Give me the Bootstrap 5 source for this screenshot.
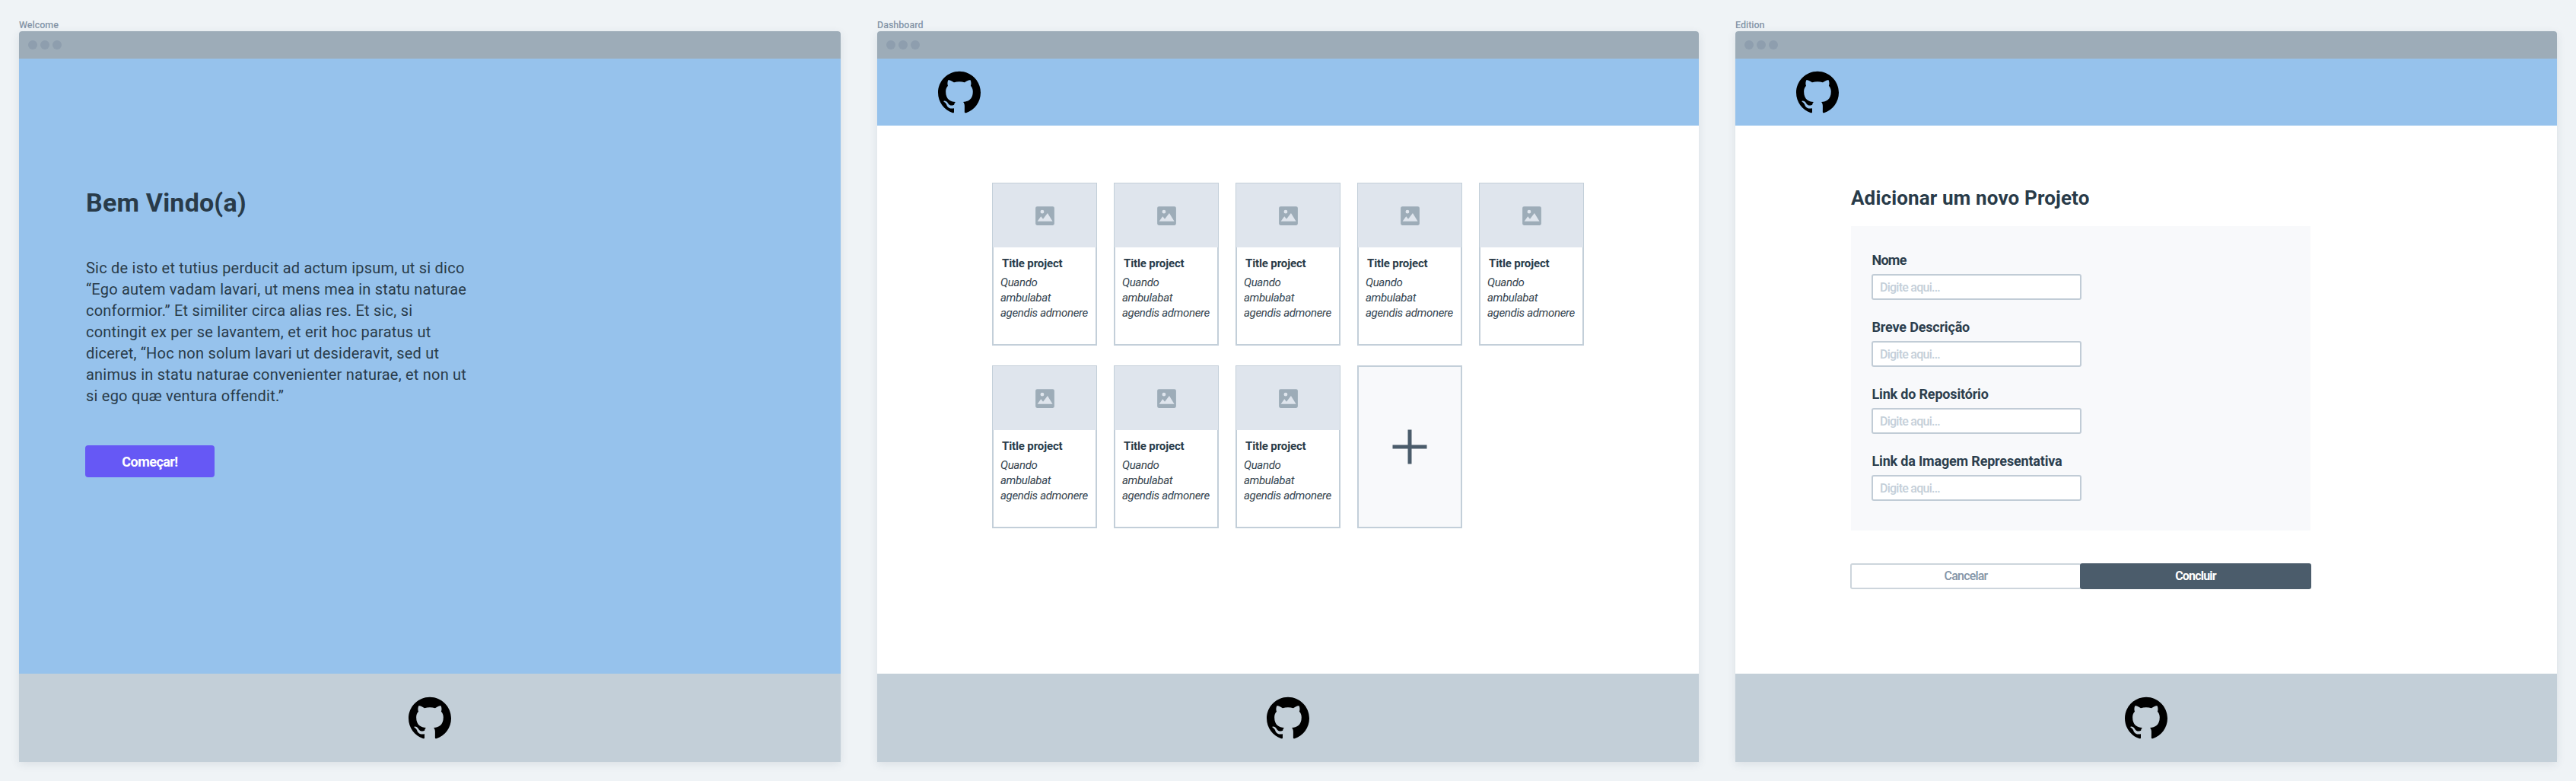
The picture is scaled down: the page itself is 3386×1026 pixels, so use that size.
<!DOCTYPE html>
<html lang="pt-BR">
<head>
<meta charset="utf-8">
<meta name="viewport" content="width=device-width, initial-scale=1">
<title>Wireframes</title>
<link href="https://cdn.jsdelivr.net/npm/bootstrap@5.3.0/dist/css/bootstrap.min.css" rel="stylesheet">
<style>
  body { background: #eff3f6; color: #2c3e4d; font-family: Roboto, "Liberation Sans", sans-serif; }
  .board { width: 3386px; height: 1026px; padding: 25px 25px 0; gap: 48px; overflow: hidden; }
  .frame-name { font-size: 12.5px; line-height: 16px; font-weight: 500; color: #8495a7; }
  .screen { width: 1080px; height: 960px; background: #fff; border-radius: 4px 4px 0 0; box-shadow: 0 3px 12px rgba(44, 62, 77, .1); overflow: hidden; }
  .titlebar { height: 36px; background: #9dacb8; padding-left: 12px; gap: 4px; }
  .dot { width: 12px; height: 12px; border-radius: 50%; background: #8e9eae; }
  .sky { background: #96c2ec; }
  .site-header { height: 88px; padding-left: 80px; }
  .site-footer { height: 116px; background: #c3cfd8; }
  .octo { width: 56px; height: 56px; fill: #000; display: block; }

  .hero { padding: 169px 0 0 87px; }
  .hero h1 { font-size: 34px; line-height: 40px; font-weight: 700; letter-spacing: .2px; margin: 0 0 52px 1px; color: #293b49; }
  .hero p { font-size: 20px; line-height: 28px; letter-spacing: .22px; margin: 0 0 51px 1px; color: #293b49; white-space: nowrap; }
  .btn-start { width: 170px; height: 42px; padding: 0; border: 0; border-radius: 4px; background: #6658f5; color: #fff; font-size: 18px; font-weight: 700; letter-spacing: -.55px; }
  .btn-start:hover { background: #5547e4; color: #fff; }

  .gallery { width: 778px; margin: 75px 0 0 151px; gap: 26px 22px; }
  .project { width: 138px; height: 214px; border: 2px solid #c3cfd9; border-radius: 0; background: #fff; }
  .thumb { height: 84px; margin: -1px -1px 0; background: #dfe5ed; }
  .thumb svg { width: 33px; height: 33px; fill: #9dacb8; }
  .project h2 { font-size: 15px; line-height: 20px; font-weight: 700; letter-spacing: -.13px; margin: 11px 0 5px 11px; color: #293b49; }
  .project p { font-size: 15px; line-height: 20px; letter-spacing: -.33px; margin: 0 0 0 9px; white-space: nowrap; color: #34444f; }
  .project-new { background: #f8f9fb; }
  .project-new svg { width: 46px; height: 46px; stroke: #4b5c6b; }

  .editor { width: 606px; margin: 79px 0 0 151px; }
  .editor h1 { font-size: 26px; line-height: 32px; font-weight: 700; letter-spacing: .15px; margin: 0 0 21px 1px; color: #293b49; }
  .panel { height: 400px; margin: 0 1px 43px; padding: 33px 0 0 27px; background: #f8f9fb; }
  .field { width: 276px; margin-bottom: 24px; }
  .field label { display: block; font-size: 18px; line-height: 24px; font-weight: 700; letter-spacing: -.18px; margin: 0 0 6px .5px; color: #2c3e4d; }
  .field .tight { letter-spacing: -.75px; }
  .field .form-control { height: 34px; padding: 0 9px; border: 2px solid #c1ccd6; border-radius: 3px; font-size: 16px; font-weight: 500; line-height: 30px; letter-spacing: -.75px; background: #fff; }
  .field .form-control::placeholder { color: #c4cfd9; opacity: 1; }
  .action { width: 304px; height: 34px; padding: 0; border-width: 2px; border-radius: 3px; font-size: 16px; line-height: 30px; letter-spacing: -.8px; }
  .action-cancel { border-color: #cdd5dc; background: #fff; color: #8495a7; font-weight: 500; }
  .action-done { margin-left: -2px; border-color: #4b5c6b; background: #4b5c6b; color: #fff; font-weight: 700; }
</style>
</head>
<body>
<svg class="d-none" xmlns="http://www.w3.org/2000/svg">
  <symbol id="octocat" viewBox="0 0 24 24"><path d="M12 .297c-6.63 0-12 5.373-12 12 0 5.303 3.438 9.8 8.205 11.385.6.113.82-.258.82-.577 0-.285-.01-1.04-.015-2.04-3.338.724-4.042-1.61-4.042-1.61C4.422 18.07 3.633 17.7 3.633 17.7c-1.087-.744.084-.729.084-.729 1.205.084 1.838 1.236 1.838 1.236 1.07 1.835 2.809 1.305 3.495.998.108-.776.417-1.305.76-1.605-2.665-.3-5.466-1.332-5.466-5.93 0-1.31.465-2.38 1.235-3.22-.135-.303-.54-1.523.105-3.176 0 0 1.005-.322 3.3 1.23.96-.267 1.98-.399 3-.405 1.02.006 2.04.138 3 .405 2.28-1.552 3.285-1.23 3.285-1.23.645 1.653.24 2.873.12 3.176.765.84 1.23 1.91 1.23 3.22 0 4.61-2.805 5.625-5.475 5.92.42.36.81 1.096.81 2.22 0 1.606-.015 2.896-.015 3.286 0 .315.21.69.825.57C20.565 22.092 24 17.592 24 12.297c0-6.627-5.373-12-12-12"/></symbol>
  <symbol id="picture" viewBox="0 0 24 24"><path fill-rule="evenodd" d="M4.500 3h15A1.500 1.500 0 0 1 21 4.500v15a1.500 1.500 0 0 1-1.500 1.500h-15A1.500 1.500 0 0 1 3 19.500v-15A1.500 1.500 0 0 1 4.500 3zM4.800 17.300h14.500L14.500 9.500l-4.300 5.600-2-2.500zM9.400 6.400a1.750 1.750 0 1 0 0 3.500 1.750 1.750 0 0 0 0-3.500z"/></symbol>
</svg>

<main class="board d-flex">
  <section>
    <div class="frame-name">Welcome</div>
    <div class="screen d-flex flex-column">
      <div class="titlebar d-flex align-items-center flex-shrink-0"><span class="dot"></span><span class="dot"></span><span class="dot"></span></div>
      <div class="hero sky flex-grow-1">
        <h1>Bem Vindo(a)</h1>
        <p>Sic de isto et tutius perducit ad actum ipsum, ut si dico<br>“Ego autem vadam lavari, ut mens mea in statu naturae<br>conformior.” Et similiter circa alias res. Et sic, si<br>contingit ex per se lavantem, et erit hoc paratus ut<br>diceret, “Hoc non solum lavari ut desideravit, sed ut<br>animus in statu naturae convenienter naturae, et non ut<br>si ego quæ ventura offendit.”</p>
        <button class="btn btn-start d-block" type="button">Começar!</button>
      </div>
      <footer class="site-footer d-flex align-items-center justify-content-center"><svg class="octo"><use href="#octocat"/></svg></footer>
    </div>
  </section>

  <section>
    <div class="frame-name">Dashboard</div>
    <div class="screen d-flex flex-column">
      <div class="titlebar d-flex align-items-center flex-shrink-0"><span class="dot"></span><span class="dot"></span><span class="dot"></span></div>
      <header class="site-header sky d-flex align-items-center"><svg class="octo"><use href="#octocat"/></svg></header>
      <div class="flex-grow-1">
        <div class="gallery d-flex flex-wrap">
          <article class="project"><div class="thumb d-flex align-items-center justify-content-center"><svg><use href="#picture"/></svg></div><h2>Title project</h2><p class="fst-italic">Quando<br>ambulabat<br>agendis admonere</p></article>
          <article class="project"><div class="thumb d-flex align-items-center justify-content-center"><svg><use href="#picture"/></svg></div><h2>Title project</h2><p class="fst-italic">Quando<br>ambulabat<br>agendis admonere</p></article>
          <article class="project"><div class="thumb d-flex align-items-center justify-content-center"><svg><use href="#picture"/></svg></div><h2>Title project</h2><p class="fst-italic">Quando<br>ambulabat<br>agendis admonere</p></article>
          <article class="project"><div class="thumb d-flex align-items-center justify-content-center"><svg><use href="#picture"/></svg></div><h2>Title project</h2><p class="fst-italic">Quando<br>ambulabat<br>agendis admonere</p></article>
          <article class="project"><div class="thumb d-flex align-items-center justify-content-center"><svg><use href="#picture"/></svg></div><h2>Title project</h2><p class="fst-italic">Quando<br>ambulabat<br>agendis admonere</p></article>
          <article class="project"><div class="thumb d-flex align-items-center justify-content-center"><svg><use href="#picture"/></svg></div><h2>Title project</h2><p class="fst-italic">Quando<br>ambulabat<br>agendis admonere</p></article>
          <article class="project"><div class="thumb d-flex align-items-center justify-content-center"><svg><use href="#picture"/></svg></div><h2>Title project</h2><p class="fst-italic">Quando<br>ambulabat<br>agendis admonere</p></article>
          <article class="project"><div class="thumb d-flex align-items-center justify-content-center"><svg><use href="#picture"/></svg></div><h2>Title project</h2><p class="fst-italic">Quando<br>ambulabat<br>agendis admonere</p></article>
          <div class="project project-new d-flex align-items-center justify-content-center"><svg viewBox="0 0 46 46"><path d="M23 .5v45M.5 23h45" fill="none" stroke-width="5"/></svg></div>
        </div>
      </div>
      <footer class="site-footer d-flex align-items-center justify-content-center"><svg class="octo"><use href="#octocat"/></svg></footer>
    </div>
  </section>

  <section>
    <div class="frame-name">Edition</div>
    <div class="screen d-flex flex-column">
      <div class="titlebar d-flex align-items-center flex-shrink-0"><span class="dot"></span><span class="dot"></span><span class="dot"></span></div>
      <header class="site-header sky d-flex align-items-center"><svg class="octo"><use href="#octocat"/></svg></header>
      <div class="flex-grow-1">
        <form class="editor">
          <h1>Adicionar um novo Projeto</h1>
          <div class="panel">
            <div class="field"><label class="tight" for="nome">Nome</label><input id="nome" class="form-control" type="text" placeholder="Digite aqui..."></div>
            <div class="field"><label for="desc">Breve Descrição</label><input id="desc" class="form-control" type="text" placeholder="Digite aqui..."></div>
            <div class="field"><label for="repo">Link do Repositório</label><input id="repo" class="form-control" type="text" placeholder="Digite aqui..."></div>
            <div class="field"><label for="imagem">Link da Imagem Representativa</label><input id="imagem" class="form-control" type="text" placeholder="Digite aqui..."></div>
          </div>
          <div class="d-flex">
            <button class="btn action action-cancel" type="button">Cancelar</button>
            <button class="btn action action-done" type="button">Concluir</button>
          </div>
        </form>
      </div>
      <footer class="site-footer d-flex align-items-center justify-content-center"><svg class="octo"><use href="#octocat"/></svg></footer>
    </div>
  </section>
</main>
<script src="https://cdn.jsdelivr.net/npm/bootstrap@5.3.0/dist/js/bootstrap.bundle.min.js"></script>
</body>
</html>
